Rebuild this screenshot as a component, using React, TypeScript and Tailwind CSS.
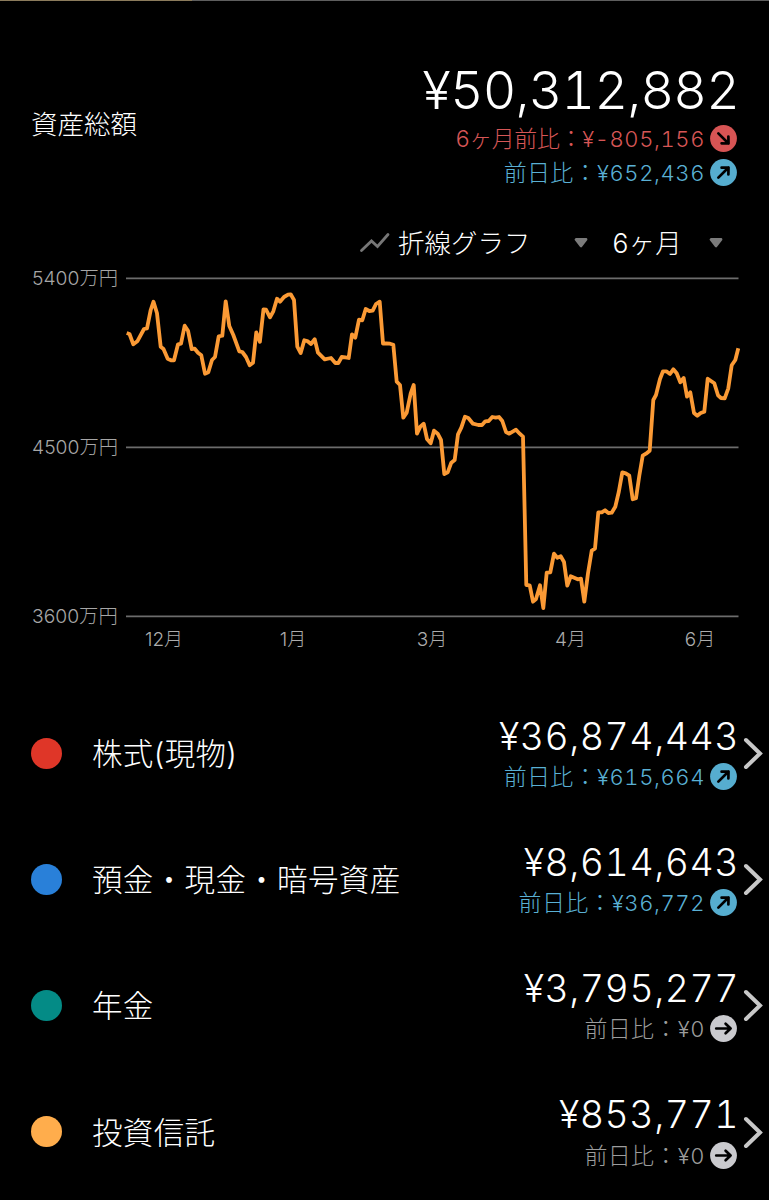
import React from 'react';

type Trend = 'up' | 'down' | 'flat';

interface Asset {
  name: string;
  dot: string;
  amount: string;
  diff: string;
  trend: Trend;
}

const assets: Asset[] = [
  { name: '株式(現物)', dot: 'bg-[#df3628]', amount: '¥36,874,443', diff: '¥615,664', trend: 'up' },
  { name: '預金・現金・暗号資産', dot: 'bg-[#2980d9]', amount: '¥8,614,643', diff: '¥36,772', trend: 'up' },
  { name: '年金', dot: 'bg-[#048b86]', amount: '¥3,795,277', diff: '¥0', trend: 'flat' },
  { name: '投資信託', dot: 'bg-[#ffad4c]', amount: '¥853,771', diff: '¥0', trend: 'flat' },
];

const textColors: Record<Trend, string> = {
  up: 'text-[#5ab0d4]',
  down: 'text-[#d65656]',
  flat: 'text-[#9c9c9c]',
};

const badgeColors: Record<Trend, string> = {
  up: 'text-[#56adcf]',
  down: 'text-[#d75454]',
  flat: 'text-[#cacace]',
};

const rotations: Record<Trend, number> = { up: -45, down: 45, flat: 0 };

// Evolución diaria del total
const points = `126.7,333 129.5,334 133.3,344.3 137.3,341.3 144,329 147,328.3 150.7,310 153.5,301.7 157,313.3 160.7,346.7
163.5,349 167.7,358.7 171,360.3 174,360.3 178,344.3 181,343.7 184.7,325.7 188,330.7 191.7,349 194.7,348.7 198,352.7
201.3,355.3 205,373.7 208.3,372.3 212,360 215,357 218.7,336.3 222.3,335.7 225.7,301.3 229.3,326 233.3,335 239.3,351.3
242.3,352 246,357 249.7,365.2 253,362.8 256.3,332.3 259.9,341.8 263.5,309.3 266,309.7 270,317.3 273.3,311.3 277,298.7
280,301.7 284,297 288,294.7 290.7,294.3 294,300 297.3,346.7 300.7,353 304.3,340.3 307.3,341 311,344 314.7,339.3
318,352.7 324.7,359.3 331,358 335.3,363 338.3,363 341.7,357 345.3,357.3 348.7,358 352,334.3 355.3,337.7 359,319.7
362.3,320.3 365.7,309 369.3,311 372.7,310.7 376,304 379.7,301.7 383,343.7 386.3,343.3 390,343.7 393.3,344.7
396.7,381.7 400,385 403.3,417.7 406.7,412.7 410.7,393.3 413.7,385 417,433.7 420.3,426.7 423.7,423.7 427,439
430.7,443.3 434,430.7 437.7,433.7 441,440 444.3,474 447.7,472.3 451.3,462.7 454.7,460 458,434.3 461.3,427.7
465,416.7 468.3,418 473,423.7 478.3,425 482,425 485.3,421.3 488.7,421 492.3,417 495.7,417.7 499,417 502.3,421
506,432 509.3,433.7 516,429.7 519.7,433.7 523,436.7 526.3,585 529.7,585.3 533,601.7 536,599 540,585.3 543.3,608
546.7,572.7 550.3,572.3 554,553.7 557.3,557.7 560.7,556.3 564,562 567.3,585.7 570.7,576.3 577.7,579.3 581,578.7
584.3,601.7 588,573.3 591.7,550.7 595,548.7 598.3,512.3 601.7,512.3 605,510.3 608.3,513 611.7,512.7 615.3,506.7
618.7,492.3 622.3,472.3 625.7,473.3 629.3,475.7 632.7,499.3 636,498.3 639.3,475.7 642.7,455.7 646,453.7 649.7,450.7
653.3,400 656,395 660,379 663,371.3 666.3,371.3 670,374 673.3,369.3 676.7,373.3 680.3,382.3 683.7,378 687,396.7
690.3,392.3 694,413 697.3,415.7 700.7,413 704.3,411.7 707.7,378.7 714.3,383.3 718,395.3 721,398 724.7,398.3
728.3,388.3 731.7,365.3 735.3,360 738.3,348.3`;

const yLabels = [
  { text: '5400万円', y: 278.3 },
  { text: '4500万円', y: 447.3 },
  { text: '3600万円', y: 616.3 },
];

const xLabels = [
  { text: '12月', x: 164 },
  { text: '1月', x: 293 },
  { text: '3月', x: 432 },
  { text: '4月', x: 570.5 },
  { text: '6月', x: 700 },
];

const TrendBadge: React.FC<{ trend: Trend }> = ({ trend }) => (
  <svg viewBox="0 0 27 27" className={`size-[27px] shrink-0 ${badgeColors[trend]}`}>
    <circle cx="13.5" cy="13.5" r="13.4" fill="currentColor" />
    <g
      transform={`rotate(${rotations[trend]} 13.5 13.5)`}
      fill="none"
      stroke="#000"
      strokeWidth="2.7"
      strokeLinecap="round"
      strokeLinejoin="round"
    >
      <path d="M6.2 13.5H20.6M15.6 8.7L20.6 13.5L15.6 18.3" />
    </g>
  </svg>
);

const Diff: React.FC<{ label: string; value: string; trend: Trend }> = ({ label, value, trend }) => (
  <div className={`flex h-[34px] items-center justify-end ${textColors[trend]}`}>
    <span className={`pt-px text-[23px] leading-[34px] ${trend === 'down' ? 'tracking-[-0.4px]' : 'tracking-[0.3px]'}`}>
      {label}：
    </span>
    <span className="mr-[5px] pt-px text-[22px] leading-[34px] tracking-[0.6px] tabular-nums">{value}</span>
    <TrendBadge trend={trend} />
  </div>
);

const Caret = () => (
  <svg viewBox="0 0 14 10" className="h-[10px] w-[14px]">
    <path d="M2 1.5H12L7 8Z" fill="#7b7b7b" stroke="#7b7b7b" strokeWidth="2.8" strokeLinejoin="round" />
  </svg>
);

const Chart = () => (
  <svg viewBox="0 264 769 396" className="block h-[396px] w-full">
    {yLabels.map(({ text, y }) => (
      <g key={text}>
        <text x="32" y={y + 7} fill="#a6a6a6" fontSize="19.3">
          {text}
        </text>
        <line x1="126" x2="738.5" y1={y} y2={y} stroke="#6c6c6c" strokeWidth="1.8" />
      </g>
    ))}
    {xLabels.map(({ text, x }) => (
      <text key={text} x={x} y="645.5" fill="#acacac" fontSize="19" textAnchor="middle">
        {text}
      </text>
    ))}
    <polyline points={points} fill="none" stroke="#fb9a35" strokeWidth="3.8" strokeLinejoin="round" />
  </svg>
);

const AssetRow: React.FC<{ asset: Asset }> = ({ asset }) => (
  <div className="flex h-[126.2px] items-center pr-[6px] pl-[30.5px]">
    <span className={`size-[31px] rounded-full ${asset.dot}`} />
    <span className="ml-[30.5px] flex-1 pt-0.5 text-[30.5px] leading-[46px] tracking-[0.35px]">{asset.name}</span>
    <div className="pt-px text-right">
      <p className="-mr-0.5 text-[37.5px] leading-[46px] tracking-[0.5px] tabular-nums">{asset.amount}</p>
      <Diff label="前日比" value={asset.diff} trend={asset.trend} />
    </div>
    <svg viewBox="0 0 20 32" className="ml-[6px] h-8 w-5">
      <path d="M3 3L17 16.5L3 30" fill="none" stroke="#c8c8c8" strokeWidth="4" strokeLinecap="round" />
    </svg>
  </div>
);

const App: React.FC = () => {
  return (
    <div className="h-[1200px] w-[769px] overflow-hidden bg-black font-['Inter','Noto_Sans_CJK_JP',sans-serif] font-light text-white">
      <div className="flex h-px">
        <div className="w-48 bg-[#8b7b5c]" />
        <div className="flex-1 bg-[#5e5e5e]" />
      </div>

      {/* Total */}
      <div className="flex h-[188px] items-end justify-between pr-8 pl-[31px]">
        <h1 className="mb-[45px] text-[26.5px] leading-[40px]">資産総額</h1>
        <div className="text-right">
          <p className="-mr-0.5 text-[52px] leading-[60px] tracking-[-0.8px] tabular-nums">¥50,312,882</p>
          <Diff label="6ヶ月前比" value="¥-805,156" trend="down" />
          <Diff label="前日比" value="¥652,436" trend="up" />
        </div>
      </div>

      {/* Selectores del gráfico */}
      <div className="mt-[33px] flex h-[42px] items-center justify-end pr-[46px]">
        <svg viewBox="0 0 32 22" className="mr-[7px] h-[22px] w-8">
          <path d="M2.5 18.5L12.5 9L18.5 14.5L29 2.5" fill="none" stroke="#777" strokeWidth="2.8" strokeLinecap="round" />
        </svg>
        <span className="mr-[44px] pt-px text-[26.5px]">折線グラフ</span>
        <Caret />
        <span className="mr-[27px] ml-[24px] pt-px text-[26.5px] tracking-[0.2px]">6ヶ月</span>
        <Caret />
      </div>

      <Chart />

      {/* Lista de activos */}
      <div className="mt-[30px]">
        {assets.map((asset) => (
          <AssetRow key={asset.name} asset={asset} />
        ))}
      </div>
    </div>
  );
};

export default App;
